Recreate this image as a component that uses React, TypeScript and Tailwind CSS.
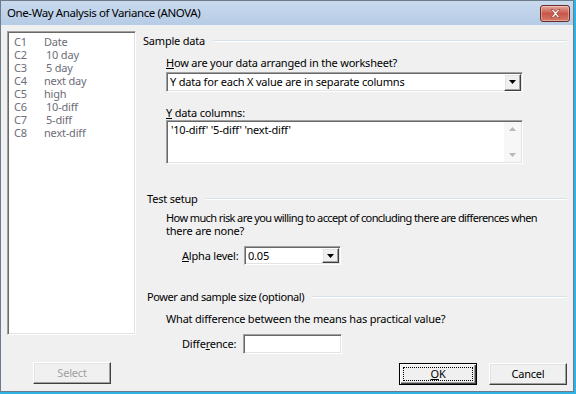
import React from "react";

const columns = [
  { id: "C1", name: "Date", pad: false },
  { id: "C2", name: "10 day", pad: true },
  { id: "C3", name: "5 day", pad: true },
  { id: "C4", name: "next day", pad: false },
  { id: "C5", name: "high", pad: false },
  { id: "C6", name: "10-diff", pad: true },
  { id: "C7", name: "5-diff", pad: true },
  { id: "C8", name: "next-diff", pad: false },
];

// classic sunken edit border
const sunken =
  "border border-t-[#a0a0a0] border-l-[#a0a0a0] border-r-white border-b-white shadow-[inset_1px_1px_0_#696969,inset_-1px_-1px_0_#e3e3e3]";
const raised =
  "border border-t-white border-l-white border-r-[#404040] border-b-[#404040] shadow-[inset_-1px_-1px_0_#a0a0a0,inset_1px_1px_0_#e3e3e3]";

function Arrow() {
  return (
    <span className={`flex h-full w-[17px] items-center justify-center bg-[#f0f0f0] ${raised}`}>
      <svg width="7" height="4" viewBox="0 0 7 4">
        <path d="M0 0h7L3.5 4z" fill="#000" />
      </svg>
    </span>
  );
}

function GroupTitle({ children, className = "" }: { children: React.ReactNode; className?: string }) {
  return (
    <div className={`flex h-[14px] items-center gap-[8px] ${className}`}>
      <span className="whitespace-nowrap leading-[14px]">{children}</span>
      <span className="h-[2px] flex-1 border-t border-t-[#d5dfe5] border-b border-b-white" />
    </div>
  );
}

function Btn({ children, def, disabled }: { children: React.ReactNode; def?: boolean; disabled?: boolean }) {
  return (
    <div
      className={`relative flex h-[22px] w-[78px] items-center justify-center bg-[#f0f0f0] ${
        def
          ? "border border-black shadow-[inset_1px_1px_0_#fff,inset_-1px_-1px_0_#404040,inset_-2px_-2px_0_#a0a0a0]"
          : raised
      } ${disabled ? "text-[#a0a0a0]" : "text-black"}`}
    >
      {def && <span className="absolute inset-[3px] border border-dotted border-black" />}
      <span className="relative leading-[14px]">{children}</span>
    </div>
  );
}

export default function App() {
  return (
    <div className="h-[394px] w-[576px] bg-[#2fb2e4] font-['Segoe_UI','Noto_Sans',sans-serif] text-[11px] tracking-[-0.2px] text-black">
      <div className="flex h-[392px] w-[574px] flex-col border border-[#6d7b8a] bg-[#f0f0f0]">
        {/* title bar */}
        <div className="flex h-[24px] shrink-0 items-center justify-between bg-gradient-to-b from-[#c9daee] to-[#b6cbe5] pl-[6px] pr-[3px]">
          <span className="text-[11.5px] leading-[16px] tracking-[-0.4px]">One-Way Analysis of Variance (ANOVA)</span>
          <div className="flex h-[17px] w-[30px] items-center justify-center rounded-[3px] border border-[#6b2b26] bg-gradient-to-b from-[#e4a69c] via-[#c8564a] to-[#d57a66] shadow-[inset_0_0_0_1px_rgba(255,255,255,0.35)]">
            <svg width="11" height="9" viewBox="0 0 11 9">
              <path d="M1 0.5h2.2L5.5 3l2.3-2.5H10L6.7 4.5 10 8.5H7.8L5.5 6 3.2 8.5H1l3.3-4z" fill="#fff" stroke="#7a2e26" strokeWidth="0.6" />
            </svg>
          </div>
        </div>

        {/* body */}
        <div className="flex flex-1 pt-[6px]">
          {/* column list */}
          <div className="ml-[6px] flex w-[129px] shrink-0 flex-col">
            <div className={`h-[304px] bg-white pl-[6px] pt-[3px] text-[#6d6d78] ${sunken}`}>
              {columns.map((c) => (
                <div key={c.id} className="flex h-[13px] items-center leading-[13px]">
                  <span className="w-[30px]">{c.id}</span>
                  <span className={c.pad ? "pl-[2px]" : ""}>{c.name}</span>
                </div>
              ))}
            </div>
            <div className="mt-[27px] ml-[26px]">
              <Btn disabled>Select</Btn>
            </div>
          </div>

          {/* form */}
          <div className="ml-[7px] mr-[6px] flex min-w-0 flex-1 flex-col">
            <GroupTitle className="mt-[3px]">Sample data</GroupTitle>
            <div className="ml-[23px] mr-[44px] flex flex-col">
              <div className="mt-[8px] leading-[14px]">
                <u>H</u>ow are your data arranged in the worksheet?
              </div>
              <div className={`mt-[2px] flex h-[20px] items-center bg-white pl-[3px] pr-[1px] ${sunken}`}>
                <span className="flex-1 leading-[14px]">Y data for each X value are in separate columns</span>
                <div className="h-[17px]">
                  <Arrow />
                </div>
              </div>
              <div className="mt-[14px] leading-[14px]">
                <u>Y</u> data columns:
              </div>
              <div className={`flex h-[44px] bg-white pl-[4px] pr-[1px] ${sunken}`}>
                <span className="mt-[2px] flex-1 leading-[14px]">'10-diff' '5-diff' 'next-diff'</span>
                <div className="my-[1px] flex w-[17px] flex-col items-center justify-between bg-[#f7f7f7] py-[5px]">
                  <svg width="7" height="4" viewBox="0 0 7 4">
                    <path d="M0 4h7L3.5 0z" fill="#b8b8b8" />
                  </svg>
                  <svg width="7" height="4" viewBox="0 0 7 4">
                    <path d="M0 0h7L3.5 4z" fill="#b8b8b8" />
                  </svg>
                </div>
              </div>
            </div>

            <GroupTitle className="mt-[28px] ml-[4px]">Test setup</GroupTitle>
            <div className="ml-[23px] mt-[5px] whitespace-nowrap leading-[13px]">
              <span className="tracking-[-0.6px]">
                How much risk are you willing to accept of concluding there are differences when
              </span>
              <br />
              there are none?
            </div>
            <div className="ml-[39px] mt-[9px] flex h-[19px] items-center">
              <span className="w-[62px] whitespace-nowrap leading-[14px]">
                <u>A</u>lpha level:
              </span>
              <div className={`flex h-[19px] w-[97px] items-center bg-white pl-[3px] pr-[1px] ${sunken}`}>
                <span className="flex-1 leading-[14px]">0.05</span>
                <div className="h-[15px]">
                  <Arrow />
                </div>
              </div>
            </div>

            <GroupTitle className="mt-[25px] ml-[4px] tracking-[-0.4px]">Power and sample size (optional)</GroupTitle>
            <div className="ml-[23px] mt-[8px] leading-[14px]">What difference between the means has practical value?</div>
            <div className="ml-[39px] mt-[8px] flex h-[20px] items-center">
              <span className="w-[61px] whitespace-nowrap leading-[14px]">
                Diffe<u>r</u>ence:
              </span>
              <div className={`h-[20px] w-[99px] bg-white ${sunken}`} />
            </div>

            <div className="mt-[9px] flex justify-end gap-[12px] pr-[0px]">
              <Btn def>
                <u>O</u>K
              </Btn>
              <Btn>Cancel</Btn>
            </div>
          </div>
        </div>
      </div>
    </div>
  );
}
